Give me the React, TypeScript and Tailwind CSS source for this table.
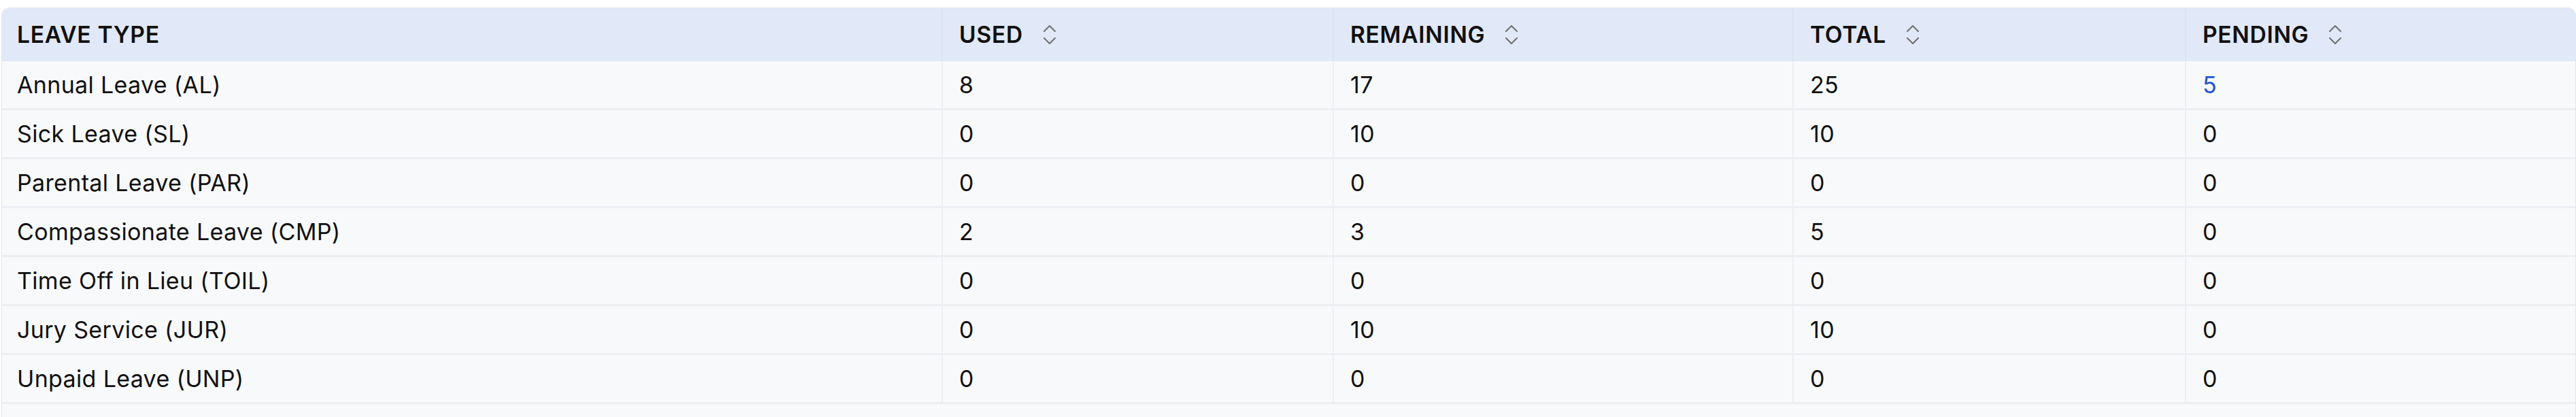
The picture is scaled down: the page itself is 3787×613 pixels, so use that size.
import type { ReactNode } from "react";

type LeaveRow = {
  name: string;
  used: number;
  remaining: number;
  total: number;
  pending: number;
};

const rows: LeaveRow[] = [
  { name: "Annual Leave (AL)", used: 8, remaining: 17, total: 25, pending: 5 },
  { name: "Sick Leave (SL)", used: 0, remaining: 10, total: 10, pending: 0 },
  { name: "Parental Leave (PAR)", used: 0, remaining: 0, total: 0, pending: 0 },
  { name: "Compassionate Leave (CMP)", used: 2, remaining: 3, total: 5, pending: 0 },
  { name: "Time Off in Lieu (TOIL)", used: 0, remaining: 0, total: 0, pending: 0 },
  { name: "Jury Service (JUR)", used: 0, remaining: 10, total: 10, pending: 0 },
  { name: "Unpaid Leave (UNP)", used: 0, remaining: 0, total: 0, pending: 0 },
];

const cols = "grid grid-cols-[1383px_575px_676px_577px_1fr]";

function SortIcon() {
  return (
    <svg width="18" height="30" viewBox="0 0 18 30" fill="none" className="shrink-0">
      <path d="M1 10 L9 2 L17 10" stroke="#6f6f6f" strokeWidth="2" strokeLinecap="round" strokeLinejoin="round" />
      <path d="M1 20 L9 28 L17 20" stroke="#6f6f6f" strokeWidth="2" strokeLinecap="round" strokeLinejoin="round" />
    </svg>
  );
}

function HeadCell({ children, sortable, last }: { children: ReactNode; sortable?: boolean; last?: boolean }) {
  return (
    <div
      className={`flex items-center gap-[30px] px-[24px] first:pl-[22px] ${
        last ? "" : "border-r-2 border-[#dbe2f0]"
      }`}
    >
      <span className="font-semibold uppercase tracking-[0.02em]">{children}</span>
      {sortable && <SortIcon />}
    </div>
  );
}

function Cell({ children, last, className }: { children: ReactNode; last?: boolean; className?: string }) {
  return (
    <div
      className={`flex items-center px-[24px] first:pl-[22px] tracking-[0.01em] text-[34px] ${
        last ? "" : "border-r-2 border-[#eceef2]"
      } ${className ?? ""}`}
    >
      {children}
    </div>
  );
}

export default function App() {
  return (
    <div className="bg-white min-h-screen pt-[11px] pl-[2px] font-['Inter',sans-serif] text-[33.6px] leading-[40px] text-[#111]">
      <div className="border border-[#e3e6ec] border-b-0 rounded-t-[12px] overflow-hidden bg-[#f8f9fb]">
        <div className={`${cols} h-[78px] bg-[#e1e8f7]`}>
          <HeadCell>Leave Type</HeadCell>
          <HeadCell sortable>Used</HeadCell>
          <HeadCell sortable>Remaining</HeadCell>
          <HeadCell sortable>Total</HeadCell>
          <HeadCell sortable last>
            Pending
          </HeadCell>
        </div>
        {rows.map((r) => (
          <div key={r.name} className={`${cols} h-[72px] border-b-[3px] border-[#eceef2]`}>
            <Cell>{r.name}</Cell>
            <Cell>{r.used}</Cell>
            <Cell>{r.remaining}</Cell>
            <Cell>{r.total}</Cell>
            <Cell last className={r.pending > 0 ? "text-[#1f55d6]" : ""}>
              {r.pending}
            </Cell>
          </div>
        ))}
        <div className="h-[40px]" />
      </div>
    </div>
  );
}
